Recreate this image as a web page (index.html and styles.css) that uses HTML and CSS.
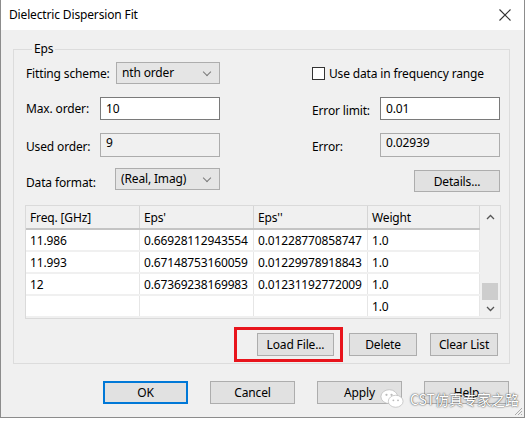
FILE: index.html
```html
<!DOCTYPE html>
<html lang="en">
<head>
  <meta charset="UTF-8" />
  <title>Dielectric Dispersion Fit</title>
  <link rel="stylesheet" href="styles.css">
</head>
<body>
  <div class="window">
    <div class="titlebar">
      <span class="title">Dielectric Dispersion Fit</span>
      <svg class="close" width="12" height="12" viewBox="0 0 12 12">
        <path d="M0.5 0.5 L11.5 11.5 M11.5 0.5 L0.5 11.5" stroke="#333" stroke-width="1.1" fill="none" />
      </svg>
    </div>

    <div class="client">
      <fieldset class="group">
        <legend>Eps</legend>

        <div class="row row-1">
          <div class="side left">
            <span class="label">Fitting scheme:</span>
            <div class="combo combo-scheme">nth order<span class="arrow"></span></div>
          </div>
          <div class="side right check">
            <span class="checkbox"></span>
            <span class="label">Use data in frequency range</span>
          </div>
        </div>

        <div class="row row-2">
          <div class="side left">
            <span class="label">Max. order:</span>
            <div class="edit">10</div>
          </div>
          <div class="side right">
            <span class="label lower">Error limit:</span>
            <div class="edit">0.01</div>
          </div>
        </div>

        <div class="row row-3">
          <div class="side left">
            <span class="label lower">Used order:</span>
            <div class="edit readonly">9</div>
          </div>
          <div class="side right">
            <span class="label lower">Error:</span>
            <div class="edit readonly">0.02939</div>
          </div>
        </div>

        <div class="row row-4">
          <div class="side left">
            <span class="label lower">Data format:</span>
            <div class="combo combo-format">(Real, Imag)<span class="arrow"></span></div>
          </div>
          <div class="side right end">
            <button class="btn btn-details">Details...</button>
          </div>
        </div>

        <div class="grid">
          <table>
            <thead>
              <tr><th>Freq. [GHz]</th><th>Eps'</th><th>Eps''</th><th>Weight</th></tr>
            </thead>
            <tbody>
              <tr><td>11.986</td><td>0.66928112943554</td><td>0.01228770858747</td><td>1.0</td></tr>
              <tr><td>11.993</td><td>0.67148753160059</td><td>0.01229978918843</td><td>1.0</td></tr>
              <tr><td>12</td><td>0.67369238169983</td><td>0.01231192772009</td><td>1.0</td></tr>
              <tr><td></td><td></td><td></td><td>1.0</td></tr>
            </tbody>
          </table>
          <div class="scrollbar">
            <svg class="sb-arrow" width="9" height="6" viewBox="0 0 9 6"><path d="M1 5 L4.5 1.5 L8 5" stroke="#555" stroke-width="1.3" fill="none" /></svg>
            <div class="sb-track"><div class="sb-thumb"></div></div>
            <svg class="sb-arrow" width="9" height="6" viewBox="0 0 9 6"><path d="M1 1 L4.5 4.5 L8 1" stroke="#555" stroke-width="1.3" fill="none" /></svg>
          </div>
        </div>

        <div class="list-buttons">
          <div class="highlight-wrap">
            <button class="btn btn-load">Load File...</button>
            <div class="highlight"></div>
          </div>
          <button class="btn btn-delete">Delete</button>
          <button class="btn btn-clear">Clear List</button>
        </div>
      </fieldset>

      <div class="dialog-buttons">
        <button class="btn btn-dlg default">OK</button>
        <button class="btn btn-dlg">Cancel</button>
        <button class="btn btn-dlg">Apply</button>
        <button class="btn btn-dlg">Help</button>
      </div>

      <!-- watermark over the bottom right corner -->
      <div class="watermark">
        <svg width="24" height="21" viewBox="0 0 26 22">
          <ellipse cx="10" cy="9" rx="9" ry="7.5" fill="#fff" stroke="#bbb" stroke-width="0.8" />
          <ellipse cx="17" cy="14" rx="8" ry="6.5" fill="#fff" stroke="#bbb" stroke-width="0.8" />
          <circle cx="7" cy="7" r="1.2" fill="#bbb" />
          <circle cx="12.5" cy="7" r="1.2" fill="#bbb" />
          <circle cx="14.5" cy="13" r="1" fill="#bbb" />
          <circle cx="19.5" cy="13" r="1" fill="#bbb" />
        </svg>
        <span>CST仿真专家之路</span>
      </div>
      <svg class="grip" width="10" height="10" viewBox="0 0 10 10">
        <path d="M9 2 L2 9 M9 5 L5 9 M9 8 L8 9" stroke="#aaa" stroke-width="1" fill="none" />
      </svg>
    </div>
  </div>
</body>
</html>
```

FILE: styles.css
```css
body {
  margin: 0;
  background: #ffffff;
  font-family: "Noto Sans", "Open Sans", sans-serif;
  font-size: 12px;
  letter-spacing: -0.15px;
  color: #000;
}

.window {
  width: 523px;
  height: 417px;
  border-left: 1px solid #8c8c8c;
  border-right: 1px solid #8c8c8c;
  border-bottom: 1px solid #8c8c8c;
  display: flex;
  flex-direction: column;
}

.titlebar {
  height: 30px;
  background: #fff;
  display: flex;
  align-items: center;
  justify-content: space-between;
  padding: 0 13px 0 8px;
  flex-shrink: 0;
}

.title {
  font-size: 12px;
  padding-bottom: 1px;
}

.client {
  flex: 1;
  background: #f0f0f0;
  position: relative;
  padding: 12px 0 0 12px;
}

.group {
  width: 497px;
  min-width: 0;
  height: 322px;
  margin: 0;
  padding: 6px 9px 0 12px;
  border: 1px solid #dcdcdc;
  box-sizing: border-box;
  display: flex;
  flex-direction: column;
}

.group legend {
  padding: 0 2px;
  margin-left: 6px;
  font-size: 12px;
  line-height: 14px;
}

.row {
  display: flex;
  justify-content: space-between;
  align-items: center;
}

.row-1 { height: 22px; }
.row-2 { height: 23px; margin-top: 13px; }
.row-3 { height: 24px; margin-top: 13px; }
.row-4 { height: 24px; margin-top: 11px; }

.side {
  display: flex;
  align-items: center;
  justify-content: space-between;
  height: 100%;
}

.left { width: 194px; }
.right { width: 188px; }
.right.check { justify-content: flex-start; }
.right.end { justify-content: flex-end; align-items: flex-end; }

.row-4 .left { align-items: flex-start; }

.label {
  white-space: nowrap;
}

.lower {
  padding-top: 3px;
}

.row-4 .lower {
  padding-top: 6px;
}

.checkbox {
  width: 11px;
  height: 11px;
  border: 1px solid #333;
  background: #fff;
  margin-right: 4px;
}

.combo {
  position: relative;
  height: 22px;
  box-sizing: border-box;
  border: 1px solid #adadad;
  background: #e5e5e5;
  padding: 1px 0 0 5px;
  line-height: 18px;
}

.combo-scheme { width: 104px; }
.combo-format { width: 105px; }

.arrow {
  position: absolute;
  right: 9px;
  top: 6px;
  width: 5px;
  height: 5px;
  border-right: 1px solid #7a7a7a;
  border-bottom: 1px solid #7a7a7a;
  transform: rotate(45deg);
}

.edit {
  width: 120px;
  height: 100%;
  box-sizing: border-box;
  border: 1px solid #7a7a7a;
  background: #fff;
  padding: 2px 0 0 5px;
}

.edit.readonly {
  background: #f0f0f0;
  border-color: #acacac;
  padding-top: 0;
}

.btn {
  font-family: inherit;
  font-size: 12px;
  letter-spacing: inherit;
  color: #000;
  background: #e1e1e1;
  border: 1px solid #adadad;
  height: 23px;
  padding: 0;
  box-sizing: border-box;
}

.btn-details {
  width: 86px;
  height: 22px;
}

.grid {
  margin-top: 13px;
  margin-left: -1px;
  width: 476px;
  height: 114px;
  box-sizing: border-box;
  border: 1px solid #dadada;
  background: #fff;
  display: flex;
}

table {
  border-collapse: collapse;
  table-layout: fixed;
  width: 454px;
  align-self: flex-start;
}

th, td {
  font-weight: normal;
  text-align: left;
  padding: 0 0 0 4px;
  white-space: nowrap;
  overflow: hidden;
  border-right: 1px solid #e6e6e6;
}

th {
  height: 22px;
  background: #f0f0f0;
  border-bottom: 2px solid #c4c4c4;
  border-right: 1px solid #d5d5d5;
}

td {
  height: 20px;
  border-bottom: 2px solid #f0f0f0;
}

th:nth-child(1), td:nth-child(1) { width: 109px; }
th:nth-child(2), td:nth-child(2) { width: 109px; }
th:nth-child(3), td:nth-child(3) { width: 109px; }

.scrollbar {
  width: 20px;
  background: #f0f0f0;
  display: flex;
  flex-direction: column;
  align-items: center;
  padding: 8px 0 6px;
  box-sizing: border-box;
}

.sb-track {
  flex: 1;
  width: 100%;
  display: flex;
  flex-direction: column;
  justify-content: flex-end;
  padding: 0 2px 6px;
  box-sizing: border-box;
}

.sb-thumb {
  height: 17px;
  background: #cdcdcd;
}

.list-buttons {
  display: flex;
  justify-content: flex-end;
  align-items: center;
  margin-top: 14px;
  padding-right: 2px;
}

.highlight-wrap {
  position: relative;
}

.btn-load { width: 77px; }

.highlight {
  position: absolute;
  left: -23px;
  top: -6px;
  width: 109px;
  height: 35px;
  box-sizing: border-box;
  border: 3px solid #e8141c;
}

.btn-delete {
  width: 68px;
  margin-left: 15px;
}

.btn-clear {
  width: 68px;
  margin-left: 13px;
}

.dialog-buttons {
  display: flex;
  gap: 22px;
  margin: 17px 0 0 90px;
}

.btn-dlg {
  width: 85px;
  height: 23px;
}

.btn-dlg.default {
  border: 1px solid #0078d7;
  box-shadow: inset 0 0 0 1px #0078d7;
}

.watermark {
  position: absolute;
  left: 379px;
  top: 358px;
  display: flex;
  align-items: center;
  gap: 6px;
  color: #fff;
  font-family: "Noto Sans CJK SC", "Noto Sans", sans-serif;
  font-size: 14px;
  letter-spacing: 0;
  text-shadow: 0 0 2px #555, 0 0 1px #555;
}

.grip {
  position: absolute;
  right: 1px;
  bottom: 1px;
}
```
